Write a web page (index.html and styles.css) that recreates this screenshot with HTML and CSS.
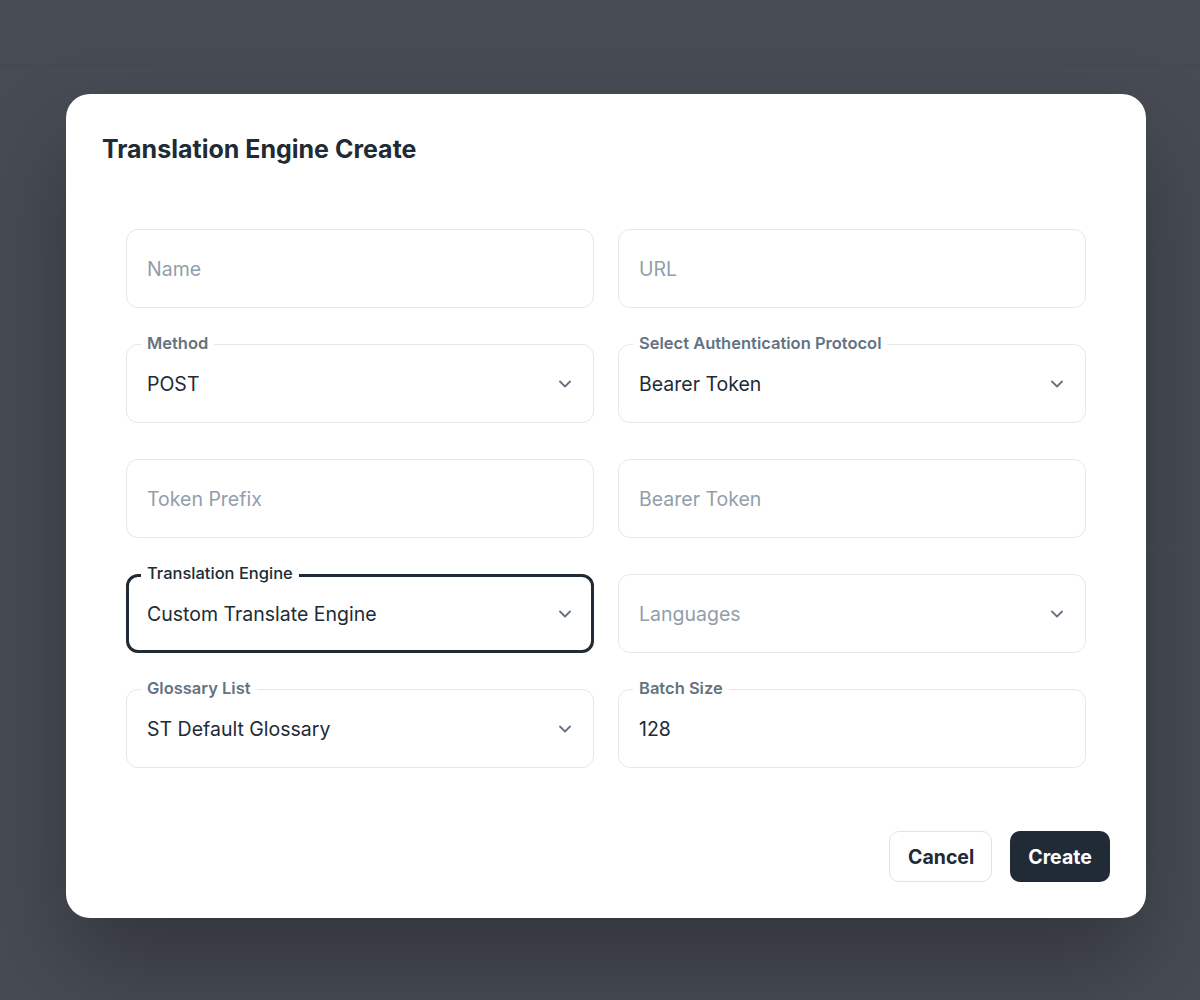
FILE: index.html
```html
<!doctype html>
<html lang="en">
  <head>
    <meta charset="UTF-8" />
    <meta name="viewport" content="width=device-width, initial-scale=1.0" />
    <title>Translation Engine Create</title>
    <link rel="stylesheet" href="styles.css">
  </head>
  <body>
    <div class="backdrop">
      <div class="page-header"></div>
      <div class="page-card"></div>
    </div>

    <div class="dialog-wrap">
      <div class="dialog">
        <h2 class="dialog-title">Translation Engine Create</h2>

        <div class="form-grid">
          <div class="field">
            <span class="placeholder">Name</span>
          </div>
          <div class="field">
            <span class="placeholder">URL</span>
          </div>

          <div class="field">
            <label class="field-label">Method</label>
            <span class="value">POST</span>
            <svg class="chevron" viewBox="0 0 24 24"><path d="M6 9l6 6 6-6" /></svg>
          </div>
          <div class="field">
            <label class="field-label">Select Authentication Protocol</label>
            <span class="value">Bearer Token</span>
            <svg class="chevron" viewBox="0 0 24 24"><path d="M6 9l6 6 6-6" /></svg>
          </div>

          <div class="field">
            <span class="placeholder">Token Prefix</span>
          </div>
          <div class="field">
            <span class="placeholder">Bearer Token</span>
          </div>

          <div class="field focused">
            <label class="field-label">Translation Engine</label>
            <span class="value">Custom Translate Engine</span>
            <svg class="chevron" viewBox="0 0 24 24"><path d="M6 9l6 6 6-6" /></svg>
          </div>
          <div class="field">
            <span class="placeholder">Languages</span>
            <svg class="chevron" viewBox="0 0 24 24"><path d="M6 9l6 6 6-6" /></svg>
          </div>

          <div class="field">
            <label class="field-label">Glossary List</label>
            <span class="value">ST Default Glossary</span>
            <svg class="chevron" viewBox="0 0 24 24"><path d="M6 9l6 6 6-6" /></svg>
          </div>
          <div class="field">
            <label class="field-label">Batch Size</label>
            <span class="value">128</span>
          </div>
        </div>

        <div class="dialog-actions">
          <button class="btn btn-outline">Cancel</button>
          <button class="btn btn-dark">Create</button>
        </div>
      </div>
    </div>
  </body>
</html>
```

FILE: styles.css
```css
* {
  box-sizing: border-box;
  margin: 0;
  padding: 0;
  font-family: Inter, 'Noto Sans', sans-serif;
}

body {
  background-color: #474b53;
  min-height: 1000px;
  position: relative;
  overflow: hidden;
}

.backdrop {
  position: absolute;
  inset: 0;
}

.page-header {
  height: 66px;
  border-bottom: 1px solid #43474f;
}

.page-card {
  margin: 0 0 0 auto;
  width: 200px;
  height: 480px;
  border-bottom: 1px solid #4a4e56;
}

.dialog-wrap {
  position: relative;
  padding: 94px 0 0 66px;
}

.dialog {
  width: 1080px;
  height: 824px;
  background-color: #fff;
  border-radius: 24px;
  box-shadow: 0 48px 96px -4px rgba(0, 0, 0, 0.3);
  padding: 36px;
  display: flex;
  flex-direction: column;
}

.dialog-title {
  font-size: 25px;
  font-weight: 700;
  color: #212b36;
  line-height: 38px;
}

.form-grid {
  display: grid;
  grid-template-columns: 1fr 1fr;
  column-gap: 24px;
  row-gap: 36px;
  margin: 61px 24px 0 24px;
}

.field {
  position: relative;
  height: 79px;
  border: 1px solid #e4e7eb;
  border-radius: 12px;
  display: flex;
  align-items: center;
  padding: 0 20px;
}

.field.focused {
  border: 3px solid #212b36;
  padding: 0 18px;
}

.field-label {
  position: absolute;
  top: -13px;
  left: 14px;
  padding: 0 6px;
  background-color: #fff;
  font-size: 16.5px;
  font-weight: 600;
  line-height: 22px;
  color: #637381;
}

.focused .field-label {
  top: -15px;
  left: 12px;
  color: #212b36;
  font-weight: 500;
}

.placeholder {
  font-size: 19.5px;
  color: #919eab;
}

.value {
  font-size: 19.5px;
  color: #212b36;
  flex: 1;
}

.chevron {
  width: 20px;
  height: 20px;
  margin-left: auto;
  margin-right: -2px;
  fill: none;
  stroke: #637381;
  stroke-width: 2.2;
  stroke-linecap: round;
  stroke-linejoin: round;
}

.dialog-actions {
  margin-top: auto;
  display: flex;
  justify-content: flex-end;
  gap: 18px;
}

.btn {
  height: 51px;
  padding: 0 18px;
  border-radius: 10px;
  font-size: 19.5px;
  font-weight: 700;
  cursor: pointer;
}

.btn-outline {
  background-color: #fff;
  color: #212b36;
  border: 1px solid #dfe3e8;
  width: 103px;
}

.btn-dark {
  background-color: #212b36;
  color: #fff;
  border: none;
  width: 100px;
}
```
